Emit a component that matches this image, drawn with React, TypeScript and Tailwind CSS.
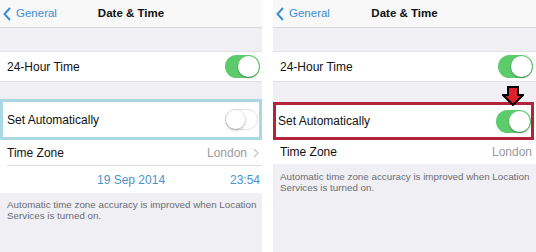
import React from "react";

function Toggle({ on }: { on: boolean }) {
  if (on) {
    return (
      <div className="relative w-[35px] h-[23px] rounded-full bg-[#5ccb6c]">
        <div className="absolute right-[1px] top-[1px] w-[21px] h-[21px] rounded-full bg-white shadow-[0_1px_2px_rgba(0,0,0,0.3)]" />
      </div>
    );
  }
  return (
    <div className="relative w-[33px] h-[21px] rounded-full bg-white border border-[#e3e3e6]">
      <div className="absolute left-0 top-0 w-[19px] h-[19px] rounded-full bg-white shadow-[0_1px_3px_rgba(0,0,0,0.35)]" />
    </div>
  );
}

function NavBar() {
  return (
    <div className="relative flex items-center h-[28px] bg-[#f8f8f8] border-b border-[#d6d6d8] shrink-0">
      <div className="flex items-center pl-[3px] gap-[5px] text-[#3a8fd4] text-[11.5px]">
        <svg width="8" height="14" viewBox="0 0 8 14">
          <polyline
            points="7,1 1.5,7 7,13"
            fill="none"
            stroke="#3a8fd4"
            strokeWidth="2"
          />
        </svg>
        <span>General</span>
      </div>
      <div className="absolute inset-0 flex items-center justify-center text-[11.5px] font-bold text-[#111]">
        Date &amp; Time
      </div>
    </div>
  );
}

function Footer({ pt }: { pt: string }) {
  return (
    <div className={`flex-1 bg-[#efeff4] pl-[7px] ${pt}`}>
      <p className="text-[9.8px] leading-[11px] text-[#6d6d72] whitespace-nowrap">
        Automatic time zone accuracy is improved when Location
        <br />
        Services is turned on.
      </p>
    </div>
  );
}

function LeftPanel() {
  return (
    <div className="flex flex-col w-[262px] h-[252px]">
      <NavBar />
      <div className="h-[24px] bg-[#efeff4] border-b border-[#e2e2e6]" />
      <div className="h-[29px] flex items-center justify-between pl-[7px] pr-[2px] bg-white text-[12px] text-[#111]">
        <span>24-Hour Time</span>
        <Toggle on />
      </div>
      <div className="h-[18px] bg-[#efeff4] border-t border-[#e2e2e6]" />
      <div className="h-[41px] flex items-center justify-between pl-[4px] pr-[1px] bg-white border-[3px] border-[#a9d8e2] text-[12px] text-[#111]">
        <span>Set Automatically</span>
        <Toggle on={false} />
      </div>
      <div className="h-[25px] flex items-center justify-between pl-[7px] pr-[3px] bg-white text-[12px]">
        <span className="text-[#111]">Time Zone</span>
        <div className="flex items-center gap-[6px] text-[#9a9a9f]">
          <span>London</span>
          <svg width="6" height="10" viewBox="0 0 6 10">
            <polyline
              points="1,1 5,5 1,9"
              fill="none"
              stroke="#c7c7cc"
              strokeWidth="1.3"
            />
          </svg>
        </div>
      </div>
      <div className="bg-white pl-[7px]">
        <div className="h-[28px] flex items-center justify-between pl-[90px] pr-[2px] border-t border-[#dcdce0] text-[12px] text-[#4a93cc]">
          <span>19 Sep 2014</span>
          <span>23:54</span>
        </div>
      </div>
      <Footer pt="pt-[6px]" />
    </div>
  );
}

function RightPanel() {
  return (
    <div className="relative flex flex-col w-[263px] h-[252px]">
      <NavBar />
      <div className="h-[24px] bg-[#efeff4] border-b border-[#e2e2e6]" />
      <div className="h-[29px] flex items-center justify-between pl-[7px] pr-[3px] bg-white text-[12px] text-[#111]">
        <span>24-Hour Time</span>
        <Toggle on />
      </div>
      <div className="h-[21px] bg-[#efeff4] border-t border-[#e2e2e6]" />
      <div className="mr-[2px] h-[38px] flex items-center justify-between pl-[2px] bg-white border-[3px] border-[#b3243a] text-[12px] text-[#111]">
        <span>Set Automatically</span>
        <Toggle on />
      </div>
      <div className="h-[24px] flex items-center justify-between pl-[7px] pr-[4px] bg-white text-[12px]">
        <span className="text-[#111]">Time Zone</span>
        <span className="text-[#9a9a9f]">London</span>
      </div>
      <Footer pt="pt-[7px]" />
      <svg
        className="absolute left-[229px] top-[86px]"
        width="22"
        height="20"
        viewBox="0 0 22 20"
      >
        <polygon
          points="6,1 16,1 16,9 21,9 11,19 1,9 6,9"
          fill="#e0202a"
          stroke="#000"
          strokeWidth="2"
          strokeLinejoin="miter"
        />
      </svg>
    </div>
  );
}

export default function App() {
  return (
    <div className="flex justify-between w-[536px] h-[252px] bg-white overflow-hidden font-['Liberation_Sans',Arial,sans-serif]">
      <LeftPanel />
      <RightPanel />
    </div>
  );
}
